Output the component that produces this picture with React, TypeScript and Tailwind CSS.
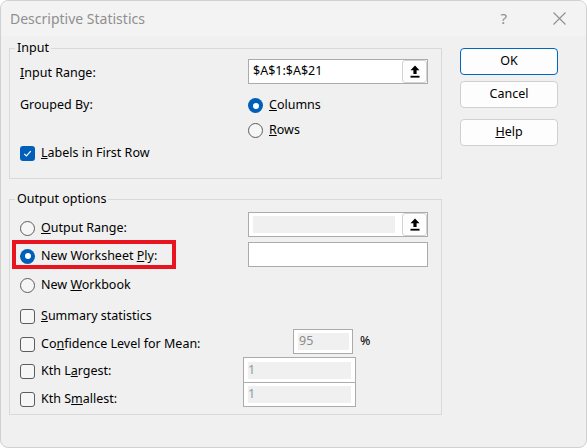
import React from 'react';

const Radio = ({ checked }: { checked?: boolean }) =>
  checked ? (
    <span className="flex h-[15px] w-[15px] shrink-0 items-center justify-center rounded-full bg-[#005fb8]">
      <span className="h-[6px] w-[6px] rounded-full bg-white" />
    </span>
  ) : (
    <span className="h-[15px] w-[15px] shrink-0 rounded-full border border-[#5c5c5c] bg-[#f6f6f6]" />
  );

const Check = ({ checked }: { checked?: boolean }) =>
  checked ? (
    <span className="flex h-[15px] w-[15px] shrink-0 items-center justify-center rounded-[3px] bg-[#005fb8]">
      <svg width="11" height="11" viewBox="0 0 11 11">
        <path d="M2.2 5.8l2.2 2.2 4.4-4.8" fill="none" stroke="white" strokeWidth="1.2" />
      </svg>
    </span>
  ) : (
    <span className="h-[15px] w-[15px] shrink-0 rounded-[3px] border border-[#5c5c5c] bg-[#f6f6f6]" />
  );

const PickButton = () => (
  <div className="ml-auto flex h-[23px] w-[25px] items-center justify-center rounded-[3px] border border-[#d3d3d3] bg-[#fdfdfd]">
    <svg width="10" height="13" viewBox="0 0 10 13">
      <path d="M5 0.5L9.5 5.2H6.6V9H3.4V5.2H0.5Z" fill="black" />
      <rect x="0.5" y="10.8" width="9" height="1.8" fill="black" />
    </svg>
  </div>
);

export default function App() {
  return (
    <div className="h-[448px] w-[587px] overflow-hidden rounded-[8px] border border-[#d0d0d0] bg-[#f0f0f0] font-['Noto_Sans',sans-serif] text-[12.5px] text-black">
      {/* title bar */}
      <div className="flex h-[35px] items-center bg-[#f3f3f3] pl-[9px] pr-[20px] text-[#8f8f8f]">
        <span className="text-[14px]">Descriptive Statistics</span>
        <span className="ml-auto text-[15px]">?</span>
        <svg className="ml-[46px]" width="13" height="13" viewBox="0 0 13 13">
          <path d="M0.5 0.5l12 12M12.5 0.5l-12 12" stroke="#8f8f8f" strokeWidth="1.1" />
        </svg>
      </div>

      <div className="flex">
        <div>
          {/* Input */}
          <fieldset className="mt-[3px] ml-[8px] w-[433px] border border-[#d9d9d9] pb-[14px]">
            <legend className="ml-[5px] px-[2px] leading-[18px]">Input</legend>
            <div className="mt-[2px] flex h-[25px] items-center">
              <div className="w-[238px] pt-[3px] pl-[10px]">
                <span className="underline">I</span>nput Range:
              </div>
              <div className="flex h-[25px] w-[180px] items-center border border-[#ababab] bg-white">
                <span className="pl-[4px]">$A$1:$A$21</span>
                <PickButton />
              </div>
            </div>
            <div className="mt-[9px] flex h-[25px] items-center">
              <div className="w-[238px] pl-[10px]">Grouped By:</div>
              <Radio checked />
              <span className="ml-[6px]">
                <span className="underline">C</span>olumns
              </span>
            </div>
            <div className="flex h-[25px] items-center pl-[238px]">
              <Radio />
              <span className="ml-[6px]">
                <span className="underline">R</span>ows
              </span>
            </div>
            <div className="flex h-[21px] items-center gap-[6px] pl-[10px]">
              <Check checked />
              <span>
                <span className="underline">L</span>abels in First Row
              </span>
            </div>
          </fieldset>

          {/* Output options */}
          <fieldset className="mt-[11px] ml-[8px] w-[433px] border border-[#d9d9d9] pb-[7px]">
            <legend className="ml-[5px] px-[2px] leading-[18px]">Output options</legend>
            <div className="mt-[4px] flex h-[25px] items-center">
              <div className="mt-[8px] flex w-[238px] items-center gap-[6px] pl-[10px]">
                <Radio />
                <span>
                  <span className="underline">O</span>utput Range:
                </span>
              </div>
              <div className="flex h-[25px] w-[180px] items-center border border-[#ababab] bg-white">
                <span className="ml-[4px] h-[17px] w-[142px] bg-[#f0f0f0]" />
                <PickButton />
              </div>
            </div>
            <div className="relative mt-[5px] flex h-[25px] items-center">
              <div className="mt-[3px] flex w-[238px] items-center gap-[6px] pl-[10px]">
                <Radio checked />
                <span>
                  New Worksheet <span className="underline">P</span>ly:
                </span>
              </div>
              <div className="h-[25px] w-[180px] border border-[#ababab] bg-white" />
              <div className="absolute top-[-2px] left-[2px] h-[29px] w-[164px] border-[4px] border-[#e8141f]" />
            </div>
            <div className="mt-[6px] flex h-[24px] items-center gap-[6px] pl-[10px]">
              <Radio />
              <span>
                New <span className="underline">W</span>orkbook
              </span>
            </div>
            <div className="mt-[7px] flex h-[24px] items-center gap-[6px] pl-[10px]">
              <Check />
              <span>
                <span className="underline">S</span>ummary statistics
              </span>
            </div>
            <div className="mt-[1px] flex h-[25px] items-center">
              <div className="mt-[6px] flex w-[283px] items-center gap-[6px] pl-[10px]">
                <Check />
                <span>
                  Co<span className="underline">n</span>fidence Level for Mean:
                </span>
              </div>
              <div className="flex h-[25px] w-[60px] items-center border border-[#ababab] bg-white">
                <span className="ml-[4px] flex h-[17px] w-[51px] items-center bg-[#f0f0f0] pl-[1px] text-[#8c8c8c]">95</span>
              </div>
              <span className="ml-[7px]">%</span>
            </div>
            <div className="mt-[3px] flex h-[26px] items-center">
              <div className="mt-[3px] flex w-[233px] items-center gap-[6px] pl-[10px]">
                <Check />
                <span>
                  Kth L<span className="underline">a</span>rgest:
                </span>
              </div>
              <div className="flex h-[26px] w-[113px] items-center border border-[#ababab] bg-white">
                <span className="ml-[4px] flex h-[17px] w-[103px] items-center bg-[#f0f0f0] text-[#8c98a8]">1</span>
              </div>
            </div>
            <div className="flex h-[24px] items-center">
              <div className="mt-[8px] flex w-[233px] items-center gap-[6px] pl-[10px]">
                <Check />
                <span>
                  Kth S<span className="underline">m</span>allest:
                </span>
              </div>
              <div className="flex h-[24px] w-[113px] items-center border border-t-0 border-[#ababab] bg-white">
                <span className="ml-[4px] flex h-[17px] w-[103px] items-center bg-[#f0f0f0] text-[#8c98a8]">1</span>
              </div>
            </div>
          </fieldset>
        </div>

        {/* buttons */}
        <div className="mt-[12px] ml-[18px] flex w-[98px] flex-col">
          <button className="h-[27px] rounded-[4px] border border-[#0067c0] bg-[#fdfdfd]">OK</button>
          <button className="mt-[6px] h-[27px] rounded-[4px] border border-[#d0d0d0] bg-[#fdfdfd]">Cancel</button>
          <button className="mt-[11px] h-[27px] rounded-[4px] border border-[#d0d0d0] bg-[#fdfdfd]">
            <span className="underline">H</span>elp
          </button>
        </div>
      </div>
    </div>
  );
}
